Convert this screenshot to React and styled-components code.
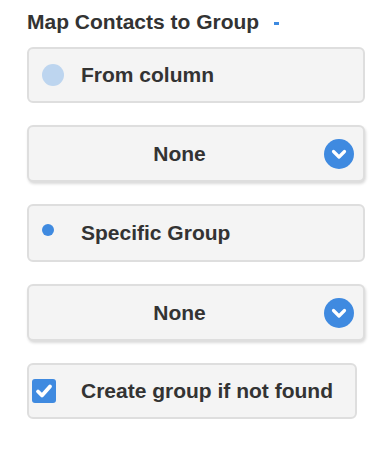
import React from "react";
import styled, { createGlobalStyle } from "styled-components";

const Global = createGlobalStyle`
  html, body { margin: 0; padding: 0; background: #fff; }
  body { font-family: "Liberation Sans", Arial, Helvetica, sans-serif; color: #333; }
`;

const Panel = styled.div`
  width: 338px;
  padding: 8px 0 0 27px;
  display: flex;
  flex-direction: column;
`;

const Title = styled.h2`
  margin: 0 0 11px 0;
  font-size: 21px;
  font-weight: 700;
  line-height: 28px;
  color: #333;
  display: flex;
  align-items: center;
  gap: 15px;
`;

const Toggle = styled.span`
  display: inline-block;
  width: 5px;
  height: 3px;
  background: #3d8ae0;
  margin-top: 2px;
`;

const List = styled.div`
  display: flex;
  flex-direction: column;
  gap: 22px;
`;

const Option = styled.label`
  box-sizing: border-box;
  width: ${(p) => p.$width || 338}px;
  height: ${(p) => p.$height || 56}px;
  background: #f4f4f4;
  border: 2px solid #dedede;
  border-radius: 6px;
  display: flex;
  align-items: center;
  font-size: 21px;
  font-weight: 700;
  color: #333;
`;

const Marker = styled.span`
  box-sizing: border-box;
  flex: 0 0 52px;
  padding-left: ${(p) => p.$inset}px;
  display: flex;
  align-items: center;
  align-self: stretch;
`;

const Bubble = styled.span`
  width: ${(p) => p.$size}px;
  height: ${(p) => p.$size}px;
  border-radius: 50%;
  background: ${(p) => p.$color};
  margin-top: ${(p) => p.$shift || 0}px;
`;

const Check = styled.span`
  width: 24px;
  height: 24px;
  border-radius: 3px;
  background: #3f8ae0;
  display: flex;
  align-items: center;
  justify-content: center;
`;

const Select = styled.div`
  box-sizing: border-box;
  width: 338px;
  height: 57px;
  background: #f4f4f4;
  border: 2px solid #dedede;
  border-radius: 6px;
  box-shadow: 1px 2px 3px rgba(0, 0, 0, 0.15);
  display: flex;
  align-items: center;
  padding: 0 9px 0 0;
  font-size: 21px;
  font-weight: 700;
  color: #333;
`;

const SelectValue = styled.span`
  flex: 1;
  text-align: center;
  padding-left: 6px;
`;

const Chevron = styled.span`
  width: 30px;
  height: 30px;
  border-radius: 50%;
  background: #3f8ae0;
  display: flex;
  align-items: center;
  justify-content: center;
`;

const Dropdown = ({ value }) => (
  <Select>
    <SelectValue>{value}</SelectValue>
    <Chevron>
      <svg width="16" height="12" viewBox="0 0 16 12">
        <path d="M2.5 3.5 L8 9 L13.5 3.5" fill="none" stroke="#fff" strokeWidth="3.2" strokeLinecap="round" strokeLinejoin="round" />
      </svg>
    </Chevron>
  </Select>
);

export default function App() {
  return (
    <>
      <Global />
      <Panel>
        <Title>
          Map Contacts to Group <Toggle />
        </Title>
        <List>
          <Option>
            <Marker $inset={13}>
              <Bubble $size={22} $color="#bdd5ef" />
            </Marker>
            From column
          </Option>
          <Dropdown value="None" />
          <Option $height={58}>
            <Marker $inset={13}>
              <Bubble $size={12} $color="#3f8ae0" $shift={-6} />
            </Marker>
            Specific Group
          </Option>
          <Dropdown value="None" />
          <Option $width={330}>
            <Marker $inset={3}>
              <Check>
                <svg width="18" height="16" viewBox="0 0 18 16">
                  <path d="M3 8.5 L7 12.5 L15 3.5" fill="none" stroke="#fff" strokeWidth="3.8" strokeLinecap="round" strokeLinejoin="round" />
                </svg>
              </Check>
            </Marker>
            Create group if not found
          </Option>
        </List>
      </Panel>
    </>
  );
}
